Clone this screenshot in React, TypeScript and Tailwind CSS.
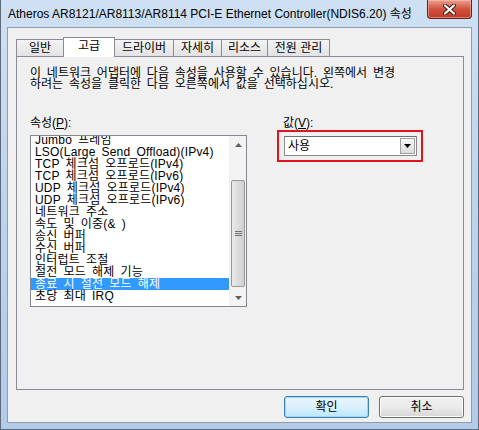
import React from "react";

const items = [
  "Jumbo 프레임",
  "LSO(Large Send Offload)(IPv4)",
  "TCP 체크섬 오프로드(IPv4)",
  "TCP 체크섬 오프로드(IPv6)",
  "UDP 체크섬 오프로드(IPv4)",
  "UDP 체크섬 오프로드(IPv6)",
  "네트워크 주소",
  "속도 및 이중(& )",
  "송신 버퍼",
  "수신 버퍼",
  "인터럽트 조절",
  "절전 모드 해제 기능",
  "종료 시 절전 모드 해제",
  "초당 최대 IRQ",
];

const tabs = [
  { label: "일반", w: "w-[48px]" },
  { label: "고급", w: "w-[52px]", sel: true },
  { label: "드라이버", w: "w-[60px]" },
  { label: "자세히", w: "w-[49px]" },
  { label: "리소스", w: "w-[47px]" },
  { label: "전원 관리", w: "w-[63px]" },
];

function Tab({ label, w, sel }: { label: string; w: string; sel?: boolean }) {
  if (sel) {
    return (
      <div
        className={`${w} -ml-px relative z-10 h-[20px] -mb-px border border-b-0 border-[#898c95] bg-white flex items-start justify-center pt-[1px] text-[12px] leading-[14px]`}
      >
        {label}
      </div>
    );
  }
  return (
    <div
      className={`${w} -ml-px first:ml-0 h-[17px] border border-b-0 border-[#898c95] bg-gradient-to-b from-[#f4f4f4] to-[#e2e2e2] flex items-start justify-center pt-[1px] text-[12px] leading-[14px]`}
    >
      {label}
    </div>
  );
}

function Scrollbar() {
  return (
    <div className="w-[17px] h-full bg-[#f3f3f3] flex flex-col border-l border-[#f0f0f0]">
      <div className="h-[17px] flex items-center justify-center">
        <svg width="7" height="4" viewBox="0 0 7 4">
          <path d="M0 4 L3.5 0 L7 4 Z" fill="#606060" />
        </svg>
      </div>
      <div className="h-[27px]" />
      <div className="h-[107px] mx-[1px] rounded-[2px] border border-[#979797] bg-gradient-to-r from-[#eaeaea] via-[#dcdcdc] to-[#cfcfcf] flex items-center justify-center">
        <svg width="7" height="8" viewBox="0 0 7 8">
          <path d="M0 1.5 H7 M0 3.5 H7 M0 5.5 H7" stroke="#6f6f6f" strokeWidth="1" />
        </svg>
      </div>
      <div className="flex-1" />
      <div className="h-[17px] flex items-center justify-center">
        <svg width="7" height="4" viewBox="0 0 7 4">
          <path d="M0 0 L3.5 4 L7 0 Z" fill="#606060" />
        </svg>
      </div>
    </div>
  );
}

export default function App() {
  return (
    <div className="w-[479px] h-[430px] overflow-hidden flex flex-col bg-gradient-to-b from-[#cfe0f3] via-[#bcd3ec] to-[#b3cbe7] border-l border-r border-b border-[#5d6b7d] text-black font-['Liberation_Sans','Noto_Sans_CJK_KR',sans-serif]">
      {/* Title bar */}
      <div className="h-[27px] flex items-start justify-between">
        <div className="pl-[7px] pt-[7px] text-[12px] leading-[15px] text-black whitespace-nowrap">
          Atheros AR8121/AR8113/AR8114 PCI-E Ethernet Controller(NDIS6.20) 속성
        </div>
        <div className="mr-[6px] w-[45px] h-[19px] rounded-b-[4px] border border-t-0 border-[#6b1e14] bg-gradient-to-b from-[#e9a08f] via-[#d0523d] to-[#c0392a] flex items-center justify-center shadow-[inset_0_0_0_1px_rgba(255,200,190,0.5)]">
          <svg width="13" height="11" viewBox="0 0 13 11">
            <path d="M2 1.5 L11 9.5 M11 1.5 L2 9.5" stroke="#3a1a14" strokeWidth="4" strokeLinecap="round" />
            <path d="M2 1.5 L11 9.5 M11 1.5 L2 9.5" stroke="#ffffff" strokeWidth="2.2" strokeLinecap="round" />
          </svg>
        </div>
      </div>

      {/* Client area */}
      <div className="mx-[6px] mb-[6px] flex-1 bg-[#f0f0f0] border border-[#8a9db5] flex flex-col px-[8px] pt-[9px]">
        {/* Tabs */}
        <div className="flex items-end h-[19px]">
          {tabs.map((t) => (
            <Tab key={t.label} label={t.label} w={t.w} sel={t.sel} />
          ))}
        </div>

        {/* Panel */}
        <div className="w-[448px] h-[334px] border border-[#898c95] bg-[#f0f0f0] pl-[13px] pt-[11px] flex flex-col">
          <div className="text-[12px] leading-[11px] [word-spacing:2.5px]">
            <div>이 네트워크 어댑터에 다음 속성을 사용할 수 있습니다. 왼쪽에서 변경</div>
            <div>하려는 속성을 클릭한 다음 오른쪽에서 값을 선택하십시오.</div>
          </div>

          <div className="flex mt-[27px]">
            {/* Left column */}
            <div className="w-[217px] flex flex-col">
              <div className="h-[13px] text-[12px] leading-[13px]">
                속성(<span className="underline">P</span>):
              </div>
              <div className="mt-[5px] h-[172px] border border-[#828790] bg-white flex">
                <div className="flex-1 overflow-hidden pt-0">
                  <div className="-mt-[2px]">
                    {items.map((it, i) => (
                      <div
                        key={it}
                        className={`h-[12px] pl-[4px] text-[12px] leading-[12px] whitespace-nowrap tracking-[0.2px] [word-spacing:2.5px] ${
                          i === 12 ? "bg-[#3399ff] text-white" : ""
                        }`}
                      >
                        {it}
                      </div>
                    ))}
                  </div>
                </div>
                <Scrollbar />
              </div>
            </div>

            {/* Right column */}
            <div className="ml-[30px] flex flex-col">
              <div className="h-[13px] pl-[6px] text-[12px] leading-[13px]">
                값(<span className="underline">V</span>):
              </div>
              <div className="w-[146px] h-[32px] border-2 border-[#e0141e] pl-[5px] pr-[4px] pt-[4px]">
                <div className="h-[20px] w-[133px] border border-[#8a8a8a] border-t-[#6d6d6d] bg-white flex items-center">
                  <div className="flex-1 pl-[3px] text-[12px] leading-[14px]">사용</div>
                  <div className="w-[15px] h-[16px] mr-[1px] border border-[#a0a0a0] bg-gradient-to-b from-[#f7f7f7] to-[#dcdcdc] flex items-center justify-center">
                    <svg width="7" height="4" viewBox="0 0 7 4">
                      <path d="M0 0 L3.5 4 L7 0 Z" fill="#000" />
                    </svg>
                  </div>
                </div>
              </div>
            </div>
          </div>
        </div>

        {/* Buttons */}
        <div className="w-[448px] flex justify-end gap-[10px] mt-[6px]">
          <button className="w-[85px] h-[22px] rounded-[3px] border border-[#3c7fb1] bg-gradient-to-b from-[#eaf6fd] via-[#d9f0fc] to-[#bee6fd] shadow-[inset_0_0_0_1px_#9fd6f5] text-[12px] leading-[14px] text-black">
            확인
          </button>
          <button className="w-[85px] h-[22px] rounded-[3px] border border-[#707070] bg-gradient-to-b from-[#f2f2f2] via-[#ebebeb] to-[#d6d6d6] shadow-[inset_0_0_0_1px_#fcfcfc] text-[12px] leading-[14px] text-black">
            취소
          </button>
        </div>
      </div>
    </div>
  );
}
